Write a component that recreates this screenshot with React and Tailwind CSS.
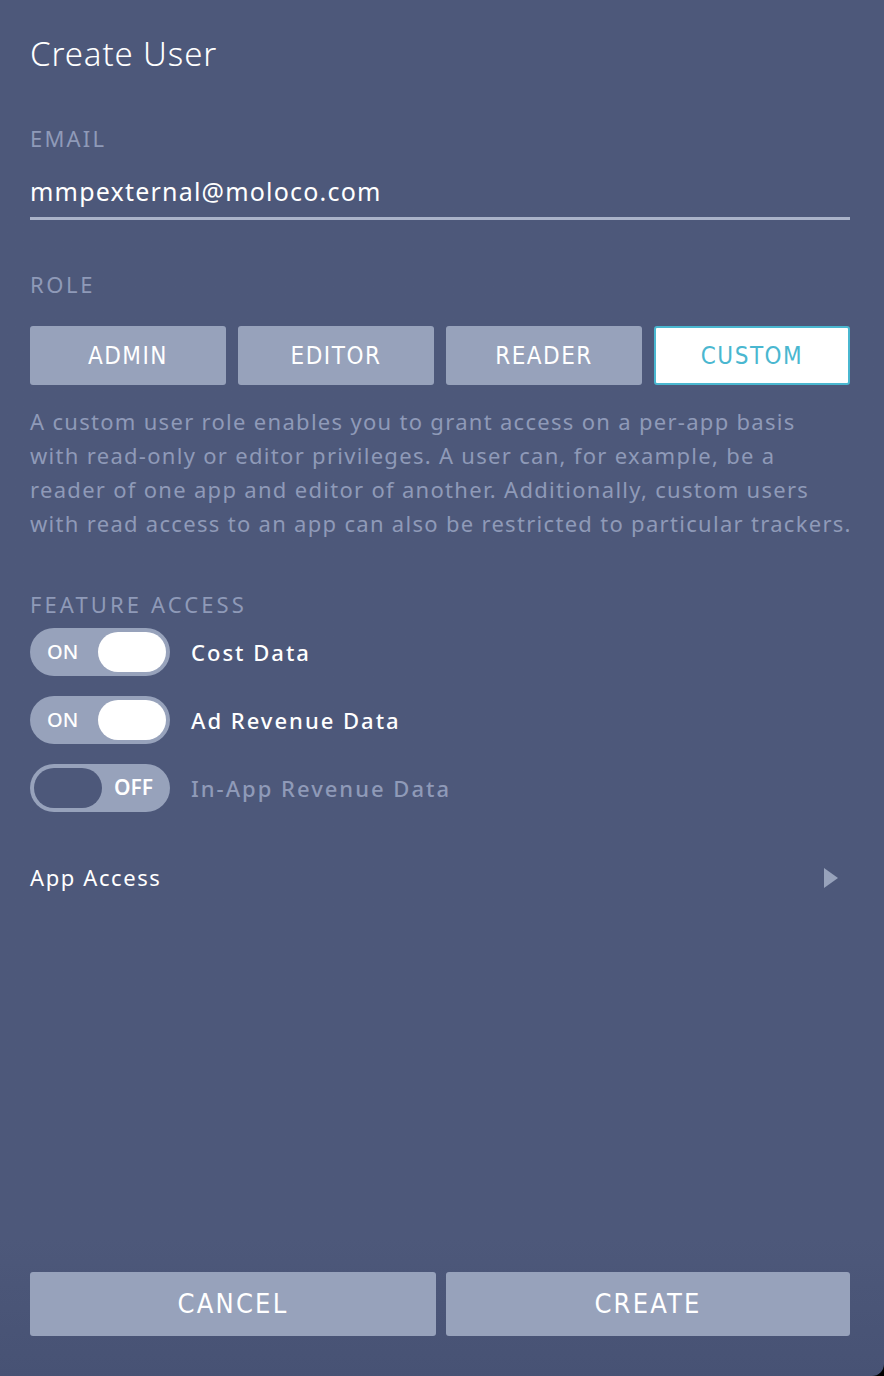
import { useState } from 'react';

const roles = ['ADMIN', 'EDITOR', 'READER', 'CUSTOM'];

function Toggle({ on }) {
  return (
    <div className="h-[48px] w-[140px] rounded-full bg-[#97a2bb] flex items-center px-[4px]">
      {on ? (
        <>
          <span className="flex-1 pl-[13px] text-[20px] font-medium text-white">ON</span>
          <span className="h-[40px] w-[68px] rounded-full bg-white" />
        </>
      ) : (
        <>
          <span className="h-[40px] w-[68px] rounded-full bg-[#4d587a]" />
          <span className="flex-1 pl-[12px] text-[21px] font-semibold text-white">OFF</span>
        </>
      )}
    </div>
  );
}

const btnFont = { fontFamily: '"DejaVu Sans Condensed", "DejaVu Sans", sans-serif' };

export default function App() {
  const [role, setRole] = useState('CUSTOM');
  const features = [
    { label: 'Cost Data', on: true },
    { label: 'Ad Revenue Data', on: true },
    { label: 'In-App Revenue Data', on: false },
  ];

  return (
    <div className="min-h-screen bg-black">
      <div
        className="h-[1376px] w-[884px] rounded-br-[12px] bg-gradient-to-b from-[#4d587a] from-90% to-[#475274] px-[30px] flex flex-col text-white"
        style={{ fontFamily: '"Noto Sans", sans-serif' }}
      >
        <h1 className="mt-[32px] text-[33px] font-light leading-[44px] tracking-[0.9px]">Create User</h1>

        <div className="mt-[48px] text-[22px] leading-[28px] tracking-[2.2px] text-[#8f9ab8]">EMAIL</div>
        <div className="mt-[23px] text-[25px] leading-[32px] tracking-[1.2px]">mmpexternal@moloco.com</div>
        <div className="mt-[10px] h-[3px] w-[820px] bg-[#aab3c9]" />

        <div className="mt-[50px] text-[22px] leading-[28px] tracking-[2.6px] text-[#8f9ab8]">ROLE</div>
        <div className="mt-[28px] grid grid-cols-4 gap-[12px] w-[820px]">
          {roles.map((r) => (
            <button
              key={r}
              onClick={() => setRole(r)}
              className={
                r === role
                  ? 'h-[59px] rounded-[3px] border-2 border-[#4ab7d0] bg-white text-[24px] tracking-[1.5px] text-[#4ab7d0]'
                  : 'h-[59px] rounded-[3px] bg-[#97a2bb] text-[24px] tracking-[1.5px] text-white'
              }
              style={btnFont}
            >
              {r}
            </button>
          ))}
        </div>

        <p className="mt-[19px] whitespace-nowrap text-[22px] leading-[34px] tracking-[1.3px] text-[#8f9ab8]">
          A custom user role enables you to grant access on a per-app basis
          <br />
          with read-only or editor privileges. A user can, for example, be a
          <br />
          reader of one app and editor of another. Additionally, custom users
          <br />
          with read access to an app can also be restricted to particular trackers.
        </p>

        <div className="mt-[50px] text-[22px] leading-[28px] tracking-[3.1px] text-[#8f9ab8]">FEATURE ACCESS</div>
        <div className="mt-[10px] flex flex-col gap-[20px]">
          {features.map((f) => (
            <div key={f.label} className="flex items-center gap-[21px]">
              <Toggle on={f.on} />
              <span
                className={
                  f.on
                    ? 'text-[22px] font-medium tracking-[2px] text-white'
                    : 'text-[22px] font-medium tracking-[2px] text-[#8f9ab8]'
                }
              >
                {f.label}
              </span>
            </div>
          ))}
        </div>

        <div className="mt-[49px] flex items-center justify-between">
          <span className="text-[22px] tracking-[1.6px]">App Access</span>
          <svg width="14" height="20" viewBox="0 0 14 20" className="mr-[16px]">
            <path d="M0 0 L14 10 L0 20 Z" fill="#97a2bb" />
          </svg>
        </div>

        <div className="mt-auto mb-[40px] flex gap-[10px] w-[820px]">
          <button
            className="h-[64px] w-[406px] rounded-[3px] bg-[#97a2bb] text-[27px] tracking-[2.2px] text-white"
            style={btnFont}
          >
            CANCEL
          </button>
          <button
            className="h-[64px] flex-1 rounded-[3px] bg-[#97a2bb] text-[27px] tracking-[2.2px] text-white"
            style={btnFont}
          >
            CREATE
          </button>
        </div>
      </div>
    </div>
  );
}
